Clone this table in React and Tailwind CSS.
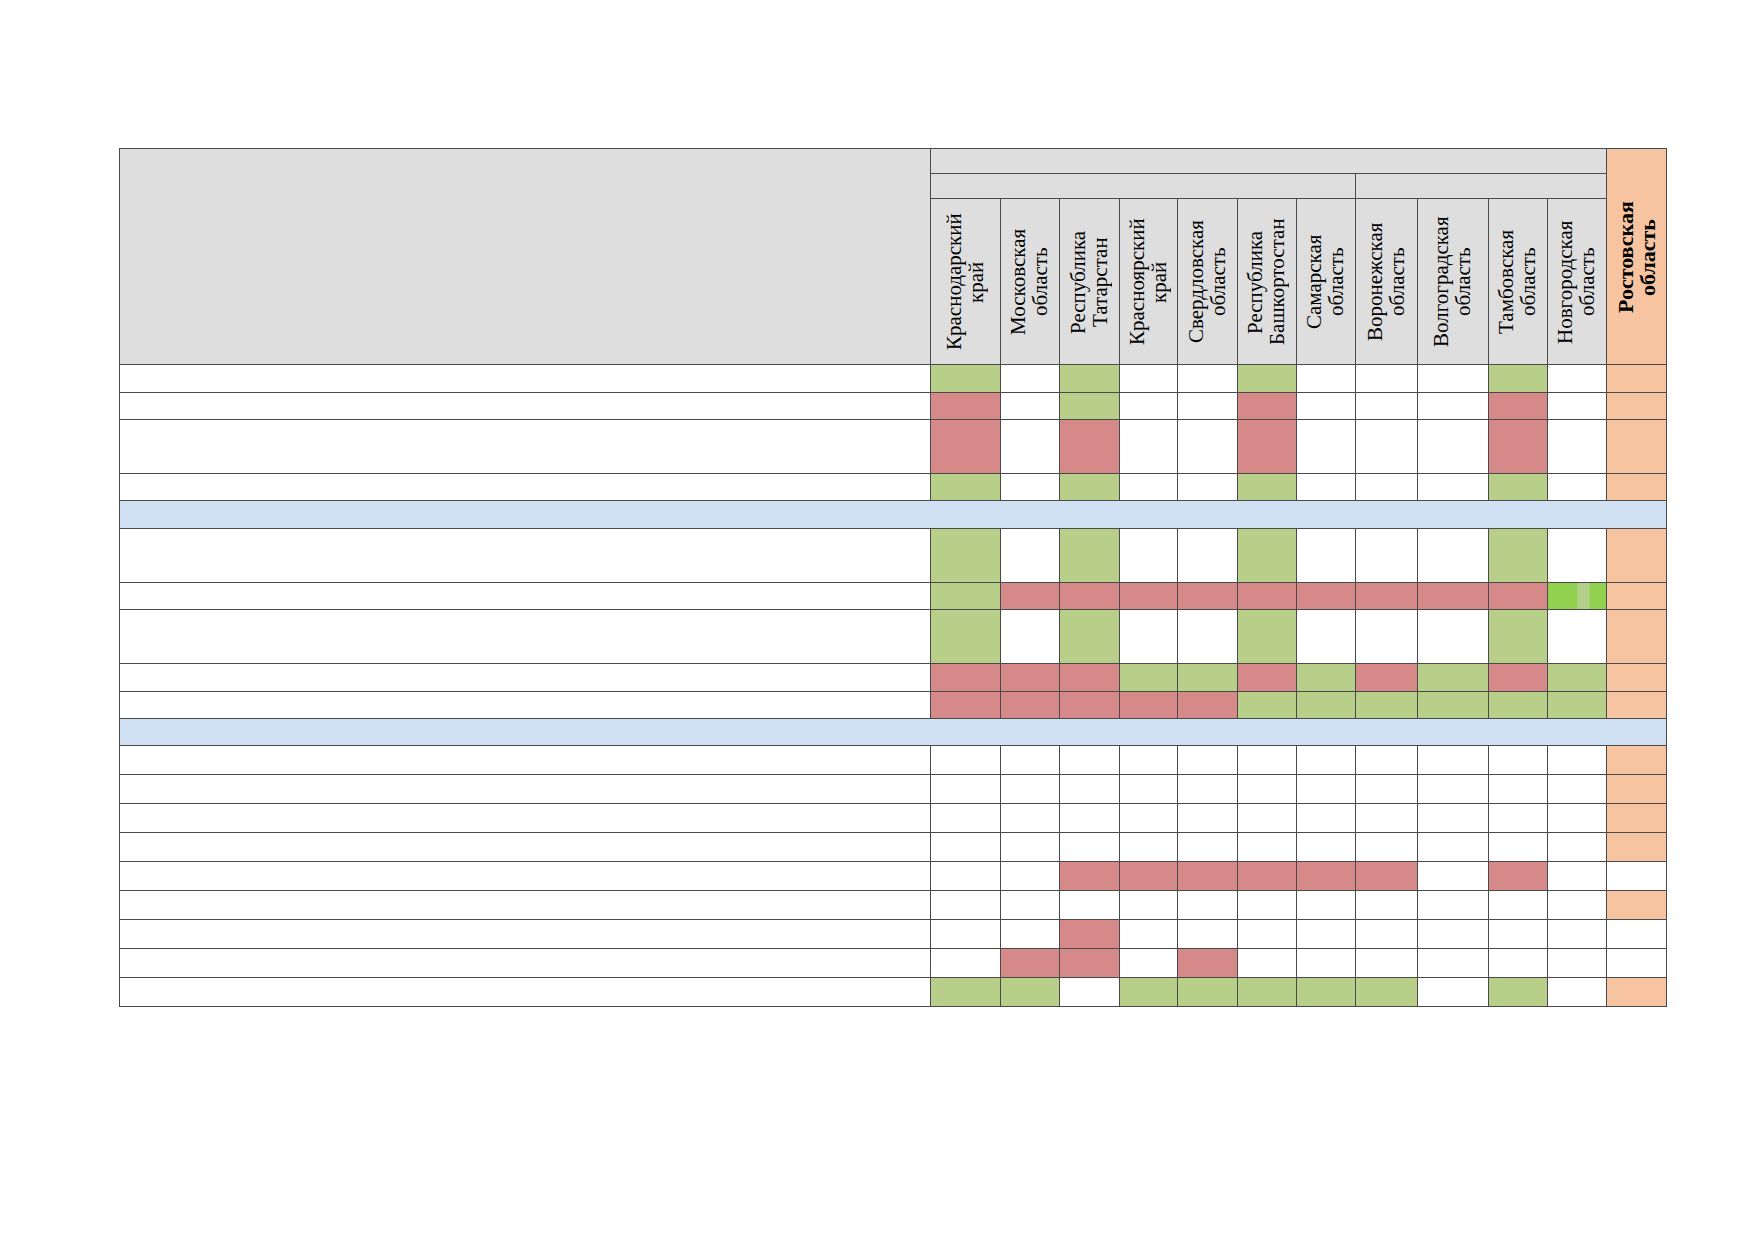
import React from 'react'

const COLS = [70, 59, 60, 58, 60, 59, 59, 62, 71, 59, 59, 60]

const REGIONS = [
  ['Краснодарский', 'край'],
  ['Московская', 'область'],
  ['Республика', 'Татарстан'],
  ['Красноярский', 'край'],
  ['Свердловская', 'область'],
  ['Республика', 'Башкортостан'],
  ['Самарская', 'область'],
  ['Воронежская', 'область'],
  ['Волгоградская', 'область'],
  ['Тамбовская', 'область'],
  ['Новгородская', 'область'],
]

const FILL = {
  G: 'bg-[#b8cf8a]',
  R: 'bg-[#d58a89]',
  W: 'bg-white',
  O: 'bg-[#f6c4a0]',
  // bright green with a paler stripe through it
  N: 'bg-[linear-gradient(90deg,#92d050_29px,#b5d08a_29px,#b5d08a_41px,#92d050_41px)]',
}

// h = row height, blue = section divider row
const ROWS = [
  { h: 28, cells: 'GWGWWGWWWGWO' },
  { h: 27, cells: 'RWGWWRWWWRWO' },
  { h: 54, cells: 'RWRWWRWWWRWO' },
  { h: 27, cells: 'GWGWWGWWWGWO' },
  { h: 28, blue: true },
  { h: 54, cells: 'GWGWWGWWWGWO' },
  { h: 27, cells: 'GRRRRRRRRRNO' },
  { h: 54, cells: 'GWGWWGWWWGWO' },
  { h: 28, cells: 'RRRGGRGRGRGO' },
  { h: 27, cells: 'RRRRRGGGGGGO' },
  { h: 27, blue: true },
  { h: 29, cells: 'WWWWWWWWWWWO' },
  { h: 29, cells: 'WWWWWWWWWWWO' },
  { h: 29, cells: 'WWWWWWWWWWWO' },
  { h: 29, cells: 'WWWWWWWWWWWO' },
  { h: 29, cells: 'WWRRRRRRWRWW' },
  { h: 29, cells: 'WWWWWWWWWWWO' },
  { h: 29, cells: 'WWRWWWWWWWWW' },
  { h: 29, cells: 'WRRWRWWWWWWW' },
  { h: 29, cells: 'GGWGGGGGWGWO' },
]

const cell = 'border border-[#4a4a4a] p-0'

function VerticalLabel({ lines, bold, h }) {
  return (
    <div
      className={`[writing-mode:vertical-rl] rotate-180 w-full flex items-center justify-center ${bold ? 'font-bold text-[22px]' : 'text-[21px]'}`}
      style={{ height: h }}
    >
      <span className="text-center leading-[21.7px] whitespace-nowrap">
        {lines[0]}
        <br />
        {lines[1]}
      </span>
    </div>
  )
}

export default function App() {
  return (
    <div className="min-h-screen bg-white pt-[148px] pl-[119px] font-['Liberation_Serif',serif] text-black">
      <table className="table-fixed border-collapse border border-[#7a7a7a] w-[1547px]">
        <colgroup>
          <col style={{ width: 811 }} />
          {COLS.map((w, i) => (
            <col key={i} style={{ width: w }} />
          ))}
        </colgroup>
        <tbody>
          <tr className="h-[25px]">
            <td rowSpan={3} className={`${cell} bg-[#dfdedf]`} />
            <td colSpan={11} className={`${cell} bg-[#dfdedf]`} />
            <td rowSpan={3} className={`${cell} bg-[#f6c4a0]`}>
              <VerticalLabel lines={['Ростовская', 'область']} bold h={212} />
            </td>
          </tr>
          <tr className="h-[25px]">
            <td colSpan={7} className={`${cell} bg-[#dfdedf]`} />
            <td colSpan={4} className={`${cell} bg-[#dfdedf]`} />
          </tr>
          <tr className="h-[166px]">
            {REGIONS.map((r, i) => (
              <td key={i} className={`${cell} bg-[#dfdedf]`}>
                <VerticalLabel lines={r} h={162} />
              </td>
            ))}
          </tr>
          {ROWS.map((row, i) =>
            row.blue ? (
              <tr key={i} style={{ height: row.h }}>
                <td colSpan={13} className={`${cell} bg-[#cfe1f2]`} />
              </tr>
            ) : (
              <tr key={i} style={{ height: row.h }}>
                <td className={`${cell} bg-white`} />
                {row.cells.split('').map((c, j) => (
                  <td key={j} className={`${cell} ${FILL[c]}`} />
                ))}
              </tr>
            )
          )}
        </tbody>
      </table>
    </div>
  )
}
